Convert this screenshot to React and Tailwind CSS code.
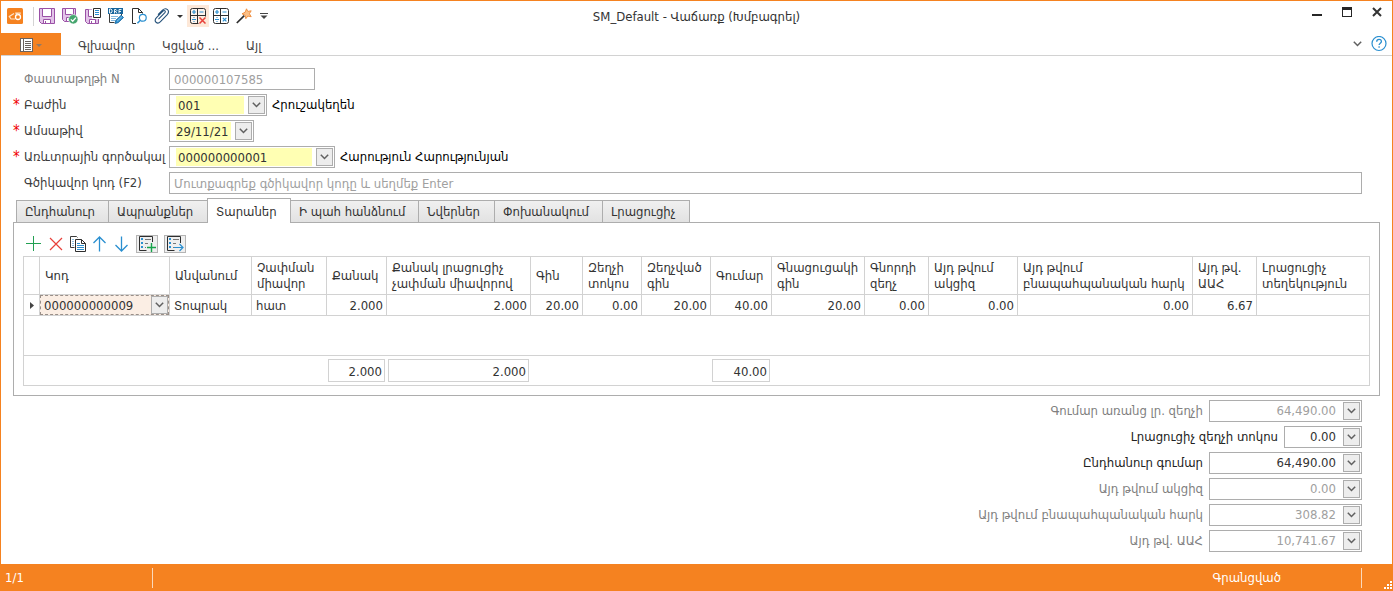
import React from "react";

const TOOL = "flex h-[22px] w-[22px] items-center justify-center";

function Svg({ children, w = 16, h = 16, crisp = false }) {
  return (
    <svg width={w} height={h} viewBox={`0 0 ${w} ${h}`} fill="none" shapeRendering={crisp ? "crispEdges" : "auto"} aria-hidden="true" className="shrink-0">
      {children}
    </svg>
  );
}

const Logo = () => (
  <Svg>
    <rect width="16" height="16" rx="1.500" fill="#f58220" />
    <path d="M7 5.500 2.300 8.500 4 11h4.200" stroke="#fde3cb" strokeWidth="1.200" />
    <circle cx="11" cy="9" r="2.500" stroke="#fff" strokeWidth="1.300" />
    <path d="M8.200 5.200h5.600M9 5l2 1.600" stroke="#fde3cb" strokeWidth="1.200" />
  </Svg>
);

const Floppy = () => (
  <>
    <path d="M.5.5h15v15h-13l-2-2z" fill="#e2c3e8" stroke="#9a50a6" />
    <path d="M3.500.5h9v8h-9z" fill="#fff" stroke="#9a50a6" />
    <path d="M4.500 11.500h7v4h-7z" fill="#fff" stroke="#9a50a6" />
    <path d="M6 13h1v2H6z" fill="#9a50a6" />
  </>
);

const SaveIcon = () => <Svg><Floppy /></Svg>;

const SaveCheckIcon = () => (
  <Svg>
    <path d="M.5.5h13v13h-11l-2-2z" fill="#e2c3e8" stroke="#9a50a6" />
    <path d="M3.500.5h8v6h-8z" fill="#fff" stroke="#9a50a6" />
    <path d="M4.500 9.500h5v4h-5z" fill="#fff" stroke="#9a50a6" />
    <circle cx="11.300" cy="11.300" r="4.700" fill="#45a56e" stroke="#fff" strokeWidth=".6" />
    <path d="m8.800 11.400 1.900 1.800 3.200-3.600" stroke="#fff" strokeWidth="1.300" />
  </Svg>
);

const SaveDocIcon = () => (
  <Svg>
    <path d="M.5 1.500h13v14h-11l-2-2z" fill="#e2c3e8" stroke="#9a50a6" />
    <path d="M3.500 1.500h4v7h-4z" fill="#fff" />
    <path d="M3.500 1.500v7H7" stroke="#9a50a6" />
    <path d="M4.500 11.500h6v4h-6z" fill="#fff" stroke="#9a50a6" />
    <path d="M6 13h1v2H6z" fill="#9a50a6" />
    <path d="M7 0h9v11H7z" fill="#fff" />
    <path d="M8.500.5h7v9h-7z" fill="#fff" stroke="#2e2e2e" />
    <path d="M10 2.500h4M10 4.500h4M10 6.500h4" stroke="#2a8fd0" />
  </Svg>
);

const DraftIcon = () => (
  <Svg>
    <path d="M1.500 6v8.500h5M13.500 6v2" stroke="#3a3a3a" />
    <path d="M0 0h15v6H0z" fill="#17659c" />
    <path d="M1.500 1v4H3l1-1V2L3 1zM6.500 5.500v-4H8l.8 1-.8 1H6.500M8 4l1 1.500M13.500 1.500h-2.500v4M11 3.500h2" stroke="#fff" strokeWidth=".9" />
    <path d="M3 8.500h7M3 10.500h5M3 12.500h4" stroke="#85b9de" />
    <path d="m7 15.500.8-3.200 5.400-5.100 2.300 2.300-5.300 5.200z" fill="#2a8fd0" stroke="#17659c" strokeWidth=".8" />
    <path d="m9 13.300 5-4.800" stroke="#a9d3ee" strokeWidth=".8" />
  </Svg>
);

const PreviewIcon = () => (
  <Svg>
    <path d="M5 15.500H1.500V.5h6l4 4v1" stroke="#2e2e2e" />
    <path d="M7.500.5v4h4" stroke="#2e2e2e" />
    <circle cx="11.800" cy="9.800" r="3.400" stroke="#2a8fd0" strokeWidth="1.200" fill="#fff" />
    <path d="m9.400 12.200-3 3.100" stroke="#2a8fd0" strokeWidth="1.500" />
  </Svg>
);

const ClipIcon = () => (
  <Svg>
    <path d="m5 11 6.200-6.300c1.600-1.600-.3-3.200-1.700-1.800L3 9.500c-3.300 3.600.8 7.200 4 4l6.500-6.700c3.800-4.300-1-8.200-4.500-4.800L4.500 6.500" transform="translate(-.5 .2)" stroke="#25517a" strokeWidth="1.100" />
  </Svg>
);

const CalcIcon = ({ cross }) => (
  <Svg>
    <rect x=".5" y=".5" width="15" height="15" rx="2" fill={cross ? "#fdf3ec" : "#fff"} stroke="#2e2e2e" />
    <path d="M7.500 0v16M0 7.500h16" stroke="#2e2e2e" />
    <path d="M2 4h4M4 2v4M9.500 4h4" stroke="#2a8fd0" strokeWidth="1.200" />
    <path d="M2 11.500h4M3.500 9.500h1M3.500 13.500h1" stroke="#2a8fd0" strokeWidth="1.100" />
    {cross ? (
      <>
        <path d="M8.500 8.500h8v8h-8z" fill="#fde8d8" />
        <path d="m9.500 9.500 6 6M15.500 9.500l-6 6" stroke="#e8403a" strokeWidth="1.500" />
      </>
    ) : (
      <path d="m9.800 9.800 3.600 3.600M13.400 9.800l-3.600 3.600" stroke="#2a8fd0" strokeWidth="1.200" />
    )}
  </Svg>
);

const WandIcon = () => (
  <Svg>
    <path d="m.8 15 7.500-7.300" stroke="#2e2e2e" strokeWidth="1.700" />
    <path d="m10.500.8 1.300 2.600 3.400-.6-1.800 2.900 1.800 3-3.400-.6-2 2.600-.6-3.400-3.200-1.500 3.100-1.500z" fill="#fbc088" stroke="#ee8a3a" strokeWidth=".9" />
  </Svg>
);

const Caret = ({ color = "#333" }) => (
  <Svg w={6} h={3}><path d="M0 0h6L3 3z" fill={color} /></Svg>
);

const Chevron = () => (
  <Svg w={9} h={6}><path d="m.8.8 3.700 3.700L8.200.8" stroke="#606060" strokeWidth="1.500" /></Svg>
);

function DropButton({ label }) {
  return (
    <button type="button" aria-label={label} className="flex h-[18px] w-[17px] shrink-0 items-center justify-center border border-[#adadad] bg-[#ededed]">
      <Chevron />
    </button>
  );
}

function FieldRow({ id, label, required, muted, children }) {
  return (
    <div className="flex h-[22px] items-center">
      <span className="w-[11px] shrink-0 text-[15px] leading-[22px] text-[#f00000]">{required ? "*" : ""}</span>
      <label htmlFor={id} className={`w-[145px] shrink-0 whitespace-nowrap ${muted ? "text-[#808080]" : "text-[#3c3c3c]"}`}>{label}</label>
      {children}
    </div>
  );
}

function Combo({ id, value, width, pad = "px-[2px]", label, note }) {
  return (
    <>
      <div className={`flex h-[22px] ${width} shrink-0 items-center gap-1 border border-[#adadad] pl-[6px] pr-px`}>
        <input id={id} defaultValue={value} className={`h-[18px] w-0 min-w-0 flex-1 bg-[#ffffb3] text-[#333] outline-none ${pad}`} />
        <DropButton label={label} />
      </div>
      {note && <span className="ml-[5px] whitespace-nowrap text-black">{note}</span>}
    </>
  );
}

const TABS = [
  { name: "Ընդհանուր", style: "w-[92px] border-l" },
  { name: "Ապրանքներ", style: "w-[99px] border-l" },
  { name: "Տարաներ", style: "w-[84px] border-x", active: true },
  { name: "Ի պահ հանձնում", style: "w-[127px]" },
  { name: "Նվերներ", style: "w-[76px] border-l" },
  { name: "Փոխանակում", style: "w-[108px] border-l" },
  { name: "Լրացուցիչ", style: "w-[88px] border-x" },
];

const COLUMNS = [
  { w: "w-[16px]", head: "", value: "" },
  { w: "w-[130px]", head: "Կոդ", value: "000000000009" },
  { w: "w-[82px]", head: "Անվանում", value: "Տոպրակ", text: true },
  { w: "w-[75px]", head: "Չափման միավոր", value: "հատ", text: true },
  { w: "w-[60px]", head: "Քանակ", value: "2.000", total: "2.000" },
  { w: "w-[144px]", head: "Քանակ լրացուցիչ չափման միավորով", value: "2.000", total: "2.000" },
  { w: "w-[52px]", head: "Գին", value: "20.00" },
  { w: "w-[59px]", head: "Զեղչի տոկոս", value: "0.00" },
  { w: "w-[69px]", head: "Զեղչված գին", value: "20.00" },
  { w: "w-[61px]", head: "Գումար", value: "40.00", total: "40.00" },
  { w: "w-[93px]", head: "Գնացուցակի գին", value: "20.00" },
  { w: "w-[64px]", head: "Գնորդի զեղչ", value: "0.00" },
  { w: "w-[89px]", head: "Այդ թվում ակցիզ", value: "0.00" },
  { w: "w-[175px]", head: "Այդ թվում բնապահպանական հարկ", value: "0.00" },
  { w: "w-[64px]", head: "Այդ թվ. ԱԱՀ", value: "6.67" },
  { w: "w-auto", head: "Լրացուցիչ տեղեկություն", value: "" },
];

const TOTALS = [
  { id: "net", label: "Գումար առանց լր. զեղչի", value: "64,490.00", muted: true },
  { id: "pct", label: "Լրացուցիչ զեղչի տոկոս", value: "0.00", narrow: true },
  { id: "sum", label: "Ընդհանուր գումար", value: "64,490.00" },
  { id: "excise", label: "Այդ թվում ակցիզ", value: "0.00", muted: true },
  { id: "eco", label: "Այդ թվում բնապահպանական հարկ", value: "308.82", muted: true },
  { id: "vat", label: "Այդ թվ. ԱԱՀ", value: "10,741.67", muted: true },
];

function TitleBar() {
  return (
    <header className="grid h-8 grid-cols-[1fr_auto_1fr] items-center">
      <div className="flex items-center gap-px pb-[2px] pl-[6px]">
        <Logo />
        <span className="mr-px ml-[9px] h-[19px] w-px bg-[#d4d4d4]" />
        <button type="button" aria-label="Save" className={TOOL}><SaveIcon /></button>
        <button type="button" aria-label="Save and check" className={TOOL}><SaveCheckIcon /></button>
        <button type="button" aria-label="Save document" className={TOOL}><SaveDocIcon /></button>
        <button type="button" aria-label="Save draft" className={TOOL}><DraftIcon /></button>
        <button type="button" aria-label="Preview" className={TOOL}><PreviewIcon /></button>
        <button type="button" aria-label="Attachments" className={TOOL}><ClipIcon /></button>
        <button type="button" aria-label="Attachment options" className="flex h-[22px] w-3 items-center justify-center"><Caret /></button>
        <button type="button" aria-label="Clear calculation" className={`${TOOL} bg-[#fde8d8]`}><CalcIcon cross /></button>
        <button type="button" aria-label="Calculate" className={TOOL}><CalcIcon /></button>
        <button type="button" aria-label="Wizard" className={TOOL}><WandIcon /></button>
        <button type="button" aria-label="Customize toolbar" className="flex h-[22px] w-4 items-center justify-center">
          <Svg w={8} h={6}><path d="M0 .5h8" stroke="#444" /><path d="M.5 2.500h7L4 6z" fill="#444" /></Svg>
        </button>
      </div>
      <h1 className="whitespace-nowrap text-[#333]">SM_Default - Վաճառք (Խմբագրել)</h1>
      <div className="flex h-6 items-start justify-end gap-5 pt-[2px] pr-[10px]">
        <button type="button" aria-label="Minimize"><Svg w={10} h={10}><path d="M0 7h10v2H0z" fill="#262626" /></Svg></button>
        <button type="button" aria-label="Maximize"><Svg w={10} h={10} crisp><path d="M.5 2v7.500h9V2" stroke="#262626" /><path d="M0 0h10v3H0z" fill="#262626" /></Svg></button>
        <button type="button" aria-label="Close"><Svg w={10} h={10}><path d="m1 1 8 8M9 1 1 9" stroke="#333" strokeWidth="2" /></Svg></button>
      </div>
    </header>
  );
}

function Ribbon() {
  const item = "pt-1 text-[#444]";
  return (
    <nav className="flex h-[23px] items-center gap-[27px] border-b border-[#d2d2d2]">
      <button type="button" aria-label="Document menu" className="-mr-[10px] flex h-[22px] w-[60px] items-center justify-center gap-[3px] bg-[#f58220] pt-[2px]">
        <Svg w={13} h={14} crisp>
          <path d="M.5.5h12v13H.5z" fill="#fff" stroke="#6b625c" />
          <path d="M3.500 1v12" stroke="#6b625c" />
          <path d="M5 3.500h6M5 5.500h6M5 7.500h6M5 9.500h6M5 11.500h6" stroke="#6b625c" />
        </Svg>
        <Caret color="#8f7a68" />
      </button>
      <button type="button" className={item}>Գլխավոր</button>
      <button type="button" className={item}>Կցված ...</button>
      <button type="button" className={item}>Այլ</button>
      <div className="ml-auto flex items-center gap-[9px] pr-[5px]">
        <button type="button" aria-label="Collapse ribbon"><Chevron /></button>
        <button type="button" aria-label="Help">
          <Svg>
            <circle cx="8" cy="7.500" r="7" stroke="#2a8fd0" strokeWidth="1.200" />
            <path d="M5.700 5.700c0-3.200 4.700-3.100 4.700-.3 0 1.700-2.300 1.800-2.300 3.600M8.100 10.300v1.500" stroke="#2a8fd0" strokeWidth="1.300" />
          </Svg>
        </button>
      </div>
    </nav>
  );
}

function GridToolbar() {
  const b = "flex h-5 w-[22px] items-center justify-center";
  return (
    <div className="flex h-5 items-center">
      <button type="button" aria-label="Add row" className={b}><Svg crisp><path d="M7.500 0v15M0 7.500h15" stroke="#22a052" /></Svg></button>
      <button type="button" aria-label="Delete row" className={b}><Svg w={14} h={14}><path d="m1 1 12 12M13 1 1 13" stroke="#e8403a" strokeWidth="1.200" /></Svg></button>
      <button type="button" aria-label="Copy row" className={b}>
        <Svg>
          <path d="M4.500 11.500h-4v-11h6l1 1" stroke="#3a3a3a" />
          <path d="M2 3.500h2M2 5.500h2M2 7.500h2M2 9.500h2" stroke="#8fc3e6" />
          <path d="M5.500 3.500h6l4 4v8h-10z" fill="#fff" stroke="#2e2e2e" />
          <path d="M11.500 3.500v4h4" stroke="#2e2e2e" />
          <path d="M7 7.500h3M7 9.500h7M7 11.500h7M7 13.500h7" stroke="#2a8fd0" />
        </Svg>
      </button>
      <button type="button" aria-label="Move up" className={b}><Svg><path d="M7.500 15.500V1M1.500 7l6-6 6 6" stroke="#2a8fd0" strokeWidth="1.300" /></Svg></button>
      <button type="button" aria-label="Move down" className={b}><Svg><path d="M7.500 .5V15M1.500 9l6 6 6-6" stroke="#2a8fd0" strokeWidth="1.300" /></Svg></button>
      <div className="ml-[3px] flex gap-[6px]">
        {["Add from list", "Open list"].map((label, i) => (
          <button key={label} type="button" aria-label={label} className="flex h-[18px] w-[22px] shrink-0 items-center justify-center border border-[#b4b4b4] bg-[#efefef]">
            <Svg w={18}>
              <path d={i ? "M14.500 7V.5H1.500v14h7" : "M14.500 6V.5H1.500v14h7"} fill="#efefef" stroke="#2e2e2e" />
              <path d="M3 2h2v2H3zM3 6h2v2H3zM3 10h2v2H3z" fill="#2a8fd0" />
              <path d="M7 3.500h6M7 7.500h3M7 11.500h1" stroke="#777" />
              {i ? (
                <path d="M8 11.500h9M13.500 8l3.500 3.500-3.500 3.500" stroke="#2a8fd0" strokeWidth="1.200" />
              ) : (
                <path d="M13.500 7v9M9 11.500h9" stroke="#16a34a" strokeWidth="1.400" />
              )}
            </Svg>
          </button>
        ))}
      </div>
    </div>
  );
}

function ItemsTable() {
  const line = "border-r border-[#d2d2d2] last:border-r-0";
  return (
    <div className="border border-[#d2d2d2]">
      <table className="w-full table-fixed border-separate border-spacing-0 text-[#333]">
        <colgroup>{COLUMNS.map((c, i) => <col key={i} className={c.w} />)}</colgroup>
        <thead>
          <tr>
            {COLUMNS.map((c, i) => (
              <th key={i} scope="col" className={`h-[38px] border-b p-0 pl-[5px] text-left align-middle font-normal leading-4 ${line}`}>{c.head}</th>
            ))}
          </tr>
        </thead>
        <tbody>
          <tr>
            {COLUMNS.map((c, i) => (
              <td key={i} className={`h-[21px] border-b p-0 ${line}`}>
                {i === 0 && <span className="flex justify-center"><Svg w={4} h={7}><path d="M0 0v7l4-3.500z" fill="#444" /></Svg></span>}
                {i === 1 && (
                  <div className="flex h-5 items-center border border-dashed border-[#9a8f88] bg-[#fbeee4]">
                    <input aria-label="Կոդ" defaultValue={c.value} className="w-0 min-w-0 flex-1 pt-px pl-[3px] outline-none" />
                    <DropButton label="Ընտրել կոդ" />
                  </div>
                )}
                {i > 1 && <div className={`pt-px whitespace-nowrap ${c.text ? "pl-1" : "pr-[3px] text-right"}`}>{c.value}</div>}
              </td>
            ))}
          </tr>
          <tr><td colSpan={16} className="h-10 border-b border-[#d2d2d2] p-0" /></tr>
        </tbody>
        <tfoot>
          <tr>
            {COLUMNS.map((c, i) => (
              <td key={i} className="h-[29px] p-0 pr-[2px] pl-px">
                {c.total && <div className="flex h-[23px] items-center justify-end border border-[#d2d2d2] pt-[2px] pr-[2px]">{c.total}</div>}
              </td>
            ))}
          </tr>
        </tfoot>
      </table>
    </div>
  );
}

export default function App() {
  return (
    <div className="flex min-h-screen flex-col border-x border-t border-[#f58220] bg-white font-['DejaVu_Sans_Condensed','DejaVu_Sans',sans-serif] text-[13px] leading-4">
      <TitleBar />
      <Ribbon />
      <main className="flex-1 px-3 pt-3 pb-3">
        <form className="flex flex-col gap-1 pr-[18px]" onSubmit={(e) => e.preventDefault()}>
          <FieldRow id="docno" label="Փաստաթղթի N" muted>
            <input id="docno" readOnly defaultValue="000000107585" className="h-[22px] w-[146px] border border-[#adadad] px-[4px] text-[#a0a0a0] outline-none" />
          </FieldRow>
          <FieldRow id="dept" label="Բաժին" required>
            <Combo id="dept" value="001" width="w-[98px]" label="Ընտրել բաժին" note="Հրուշակեղեն" />
          </FieldRow>
          <FieldRow id="date" label="Ամսաթիվ" required>
            <Combo id="date" value="29/11/21" width="w-[85px]" pad="px-0" label="Ընտրել ամսաթիվ" />
          </FieldRow>
          <FieldRow id="agent" label="Առևտրային գործակալ" required>
            <Combo id="agent" value="000000000001" width="w-[166px]" label="Ընտրել գործակալ" note="Հարություն Հարությունյան" />
          </FieldRow>
          <FieldRow id="barcode" label="Գծիկավոր կոդ (F2)">
            <input id="barcode" placeholder="Մուտքագրեք գծիկավոր կոդը և սեղմեք Enter" className="h-[22px] min-w-0 flex-1 border border-[#adadad] px-[4px] outline-none placeholder:text-[#a0a0a0]" />
          </FieldRow>
        </form>

        <div role="tablist" className="relative z-10 mt-1 -mb-px flex h-[25px] items-end pl-[3px]">
          {TABS.map((t) => (
            <button
              key={t.name}
              type="button"
              role="tab"
              aria-selected={Boolean(t.active)}
              className={`${t.style} ${t.active ? "h-[25px] bg-white pt-px" : "h-[23px] border-b bg-linear-to-b from-[#f0f0f0] to-[#e2e2e2]"} shrink-0 border-t border-[#adadad] px-2 text-left whitespace-nowrap text-[#333]`}
            >
              {t.name}
            </button>
          ))}
        </div>
        <section className="border border-[#adadad] px-[9px] pt-[11px] pb-[9px]">
          <GridToolbar />
          <div className="mt-[2px]"><ItemsTable /></div>
        </section>

        <div className="mt-1 flex flex-col items-end gap-1 pr-[18px]">
          {TOTALS.map((t) => (
            <div key={t.id} className="flex h-[22px] items-center gap-[6px]">
              <label htmlFor={t.id} className={`whitespace-nowrap ${t.muted ? "text-[#808080]" : "text-[#222]"}`}>{t.label}</label>
              <div className={`flex h-[22px] ${t.narrow ? "w-[78px]" : "w-[153px]"} items-center gap-[5px] border border-[#adadad] pr-px`}>
                <input id={t.id} defaultValue={t.value} readOnly={t.muted} className={`w-0 min-w-0 flex-1 pr-[2px] text-right outline-none ${t.muted ? "text-[#a0a0a0]" : "text-[#333]"}`} />
                <DropButton label={t.label} />
              </div>
            </div>
          ))}
        </div>
      </main>
      <footer className="flex h-[27px] items-center bg-[#f58220] text-white">
        <span className="w-[151px] pl-1">1/1</span>
        <span className="h-5 w-px bg-[#fbd9bb]" />
        <span className="mr-20 ml-auto">Գրանցված</span>
        <span className="h-5 w-px bg-[#fbd9bb]" />
        <span className="flex h-full w-[30px] items-end justify-end pb-[2px]">
          <Svg w={8} h={8} crisp>
            <path d="M6 0h2v2H6zM3 3h2v2H3zM6 3h2v2H6zM0 6h2v2H0zM3 6h2v2H3zM6 6h2v2H6z" fill="#fff" />
          </Svg>
        </span>
      </footer>
    </div>
  );
}
